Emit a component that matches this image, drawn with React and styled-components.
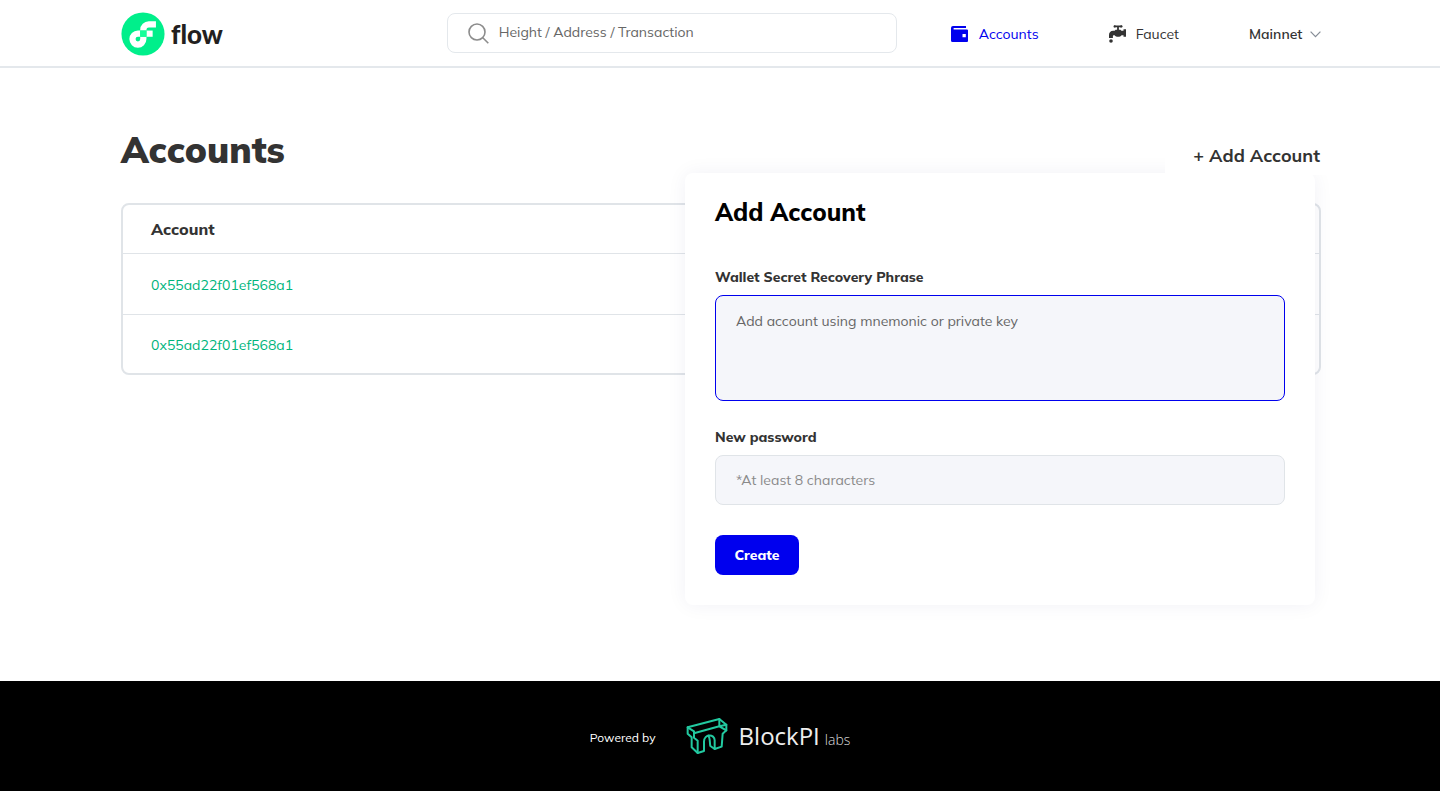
import React from "react";
import styled, { createGlobalStyle } from "styled-components";

const GlobalStyle = createGlobalStyle`
  *, *::before, *::after { box-sizing: border-box; }
  body {
    margin: 0;
    background: #fff;
    color: #333;
    font: 400 14px/20px Mulish, "Open Sans", sans-serif;
  }
  button, input, textarea, select { font: inherit; color: inherit; }
`;

const Page = styled.div`
  min-height: 100vh;
  display: flex;
  flex-direction: column;
`;

const Header = styled.header`
  padding: 13px 20px 13px 22px;
  border-bottom: 2px solid #e4e8ec;
`;

const Container = styled.div`
  width: 100%;
  max-width: 1200px;
  margin: 0 auto;
`;

const HeaderBar = styled(Container)`
  display: flex;
  align-items: center;
  justify-content: space-between;
  height: 40px;
`;

const Logo = styled.a`
  display: flex;
  align-items: center;
  gap: 6px;
  padding-top: 2px;
  color: #231f20;
  text-decoration: none;
  font: 900 26px/32px Lato, sans-serif;
  font-variant-ligatures: none;
`;

const HeaderRight = styled.div`
  display: flex;
  align-items: center;
  gap: 54px;
`;

const SearchBox = styled.label`
  display: flex;
  align-items: center;
  gap: 10px;
  width: 450px;
  height: 40px;
  padding: 0 20px;
  border: 1px solid #e4e8ec;
  border-radius: 8px;
  color: #8c8c8c;
`;

const SearchInput = styled.input`
  flex: 1;
  min-width: 0;
  height: 36px;
  padding: 0 0 2px;
  border: 0;
  outline: 0;
  background: transparent;
  &::placeholder { color: #666; opacity: 1; }
`;

const Nav = styled.nav`
  display: flex;
  align-items: center;
  gap: 70px;
  padding-top: 2px;
`;

const NavLink = styled.a`
  display: flex;
  align-items: center;
  gap: 10px;
  color: ${(p) => (p.$active ? "#0000ee" : "#333")};
  text-decoration: none;
`;

const NetworkPicker = styled.div`
  display: flex;
  align-items: center;
  position: relative;
`;

const NetworkSelect = styled.select`
  appearance: none;
  padding: 0 18px 0 0;
  border: 0;
  background: transparent;
  font-weight: 600;
`;

const Chevron = styled.svg`
  position: absolute;
  right: 0;
  pointer-events: none;
`;

const Main = styled.main`
  flex: 1;
  padding: 59px 20px 60px 22px;
`;

const TitleRow = styled.div`
  display: flex;
  align-items: flex-end;
  justify-content: space-between;
  margin-bottom: 28px;
`;

const PageTitle = styled.h1`
  margin: 0;
  padding-bottom: 2px;
  font-size: 36px;
  line-height: 46px;
  font-weight: 900;
`;

const AddMenu = styled.div`
  position: relative;
`;

const AddButton = styled.button`
  position: relative;
  z-index: 2;
  display: block;
  height: 38px;
  margin-right: -28px;
  padding: 0 29px 0 28px;
  border: 0;
  background: #fff;
  font-size: 18px;
  line-height: 24px;
  font-weight: 700;
`;

const Popover = styled.form`
  position: absolute;
  z-index: 1;
  top: calc(100% - 2px);
  right: 6px;
  width: 630px;
  padding: 24px 30px 30px;
  border-radius: 8px;
  background: #fff;
  box-shadow: 0 0 20px rgba(30, 40, 110, 0.06);
`;

const PopoverTitle = styled.h2`
  margin: 0 0 40px;
  color: #000;
  font-size: 24px;
  line-height: 30px;
  font-weight: 800;
`;

const FieldLabel = styled.label`
  display: block;
  margin-bottom: 8px;
  font-weight: 800;
`;

const PhraseInput = styled.textarea`
  display: block;
  width: 100%;
  height: 106px;
  margin-bottom: 26px;
  padding: 15px 20px;
  border: 1px solid #0000ee;
  border-radius: 8px;
  outline: 0;
  resize: none;
  background: #f5f6fa;
  &::placeholder { color: #666; opacity: 1; }
`;

const PasswordInput = styled.input`
  display: block;
  width: 100%;
  height: 50px;
  margin-bottom: 30px;
  padding: 0 20px;
  border: 1px solid #e0e4e8;
  border-radius: 8px;
  outline: 0;
  background: #f5f6fa;
  &::placeholder { color: #8a8a8a; opacity: 1; }
`;

const SubmitButton = styled.button`
  display: block;
  min-width: 84px;
  height: 40px;
  padding: 0 18px;
  border: 0;
  border-radius: 8px;
  background: #0000ee;
  color: #fff;
  font-weight: 800;
`;

const AccountTable = styled.table`
  width: 100%;
  border: 2px solid #e0e4e8;
  border-radius: 8px;
  border-collapse: separate;
  border-spacing: 0;
`;

const HeadCell = styled.th`
  height: 49px;
  padding: 0 28px;
  border-bottom: 1px solid #e0e4e8;
  text-align: left;
  font-size: 16px;
  font-weight: 800;
`;

const Cell = styled.td`
  height: 61px;
  padding: 2px 28px 0;
  border-bottom: 1px solid #e0e4e8;
  tr:last-child > & { height: 58px; border-bottom: 0; }
`;

const AddressLink = styled.a`
  color: #00b57c;
  text-decoration: none;
`;

const Footer = styled.footer`
  display: flex;
  align-items: center;
  justify-content: center;
  gap: 30px;
  height: 110px;
  background: #000;
  color: #fff;
`;

const PoweredBy = styled.span`
  padding-top: 4px;
  font-size: 12px;
`;

const Brand = styled.a`
  display: flex;
  align-items: center;
  gap: 11px;
  color: #eee;
  text-decoration: none;
`;

const BrandName = styled.span`
  display: flex;
  align-items: baseline;
  gap: 5px;
  padding-top: 4px;
  font-family: "Open Sans", sans-serif;
  font-size: 24px;
  line-height: 32px;
`;

const BrandSuffix = styled.span`
  color: #ddd;
  font-size: 14px;
  font-weight: 300;
`;

const FlowMark = () => (
  <svg width="44" height="44" viewBox="0 0 100 100" aria-hidden="true">
    <circle cx="50" cy="50" r="49" fill="#00ef8b" />
    <path fill="#fff" d="M57.82 42.18h14.12V56.3H57.82z" />
    <path fill="#fff" d="M43.71 61.59a5.3 5.3 0 1 1-5.3-5.3h5.3V42.18h-5.3a19.41 19.41 0 1 0 19.41 19.41v-5.3H43.71Z" />
    <path fill="#fff" d="M63.12 35.12h16.29V21H63.12a19.43 19.43 0 0 0-19.41 19.41v1.77h14.11v-1.77a5.3 5.3 0 0 1 5.3-5.29Z" />
    <path fill="#16ff99" d="M43.71 42.18h14.11v14.11H43.71z" />
  </svg>
);

const SearchIcon = () => (
  <svg width="21" height="21" viewBox="0 0 21 21" fill="none" stroke="currentColor" strokeWidth="1.6" aria-hidden="true">
    <circle cx="9" cy="9" r="8" />
    <path d="M14.8 14.8 20.3 20.3" />
  </svg>
);

const WalletIcon = () => (
  <svg width="18" height="16" viewBox="0 0 18 16" aria-hidden="true">
    <path
      fill="currentColor"
      fillRule="evenodd"
      d="M2 0h13v2H2.6v1.4H16a1 1 0 0 1 1 1V15a1 1 0 0 1-1 1H1.5A1.5 1.5 0 0 1 0 14.5V2a2 2 0 0 1 2-2ZM11.5 8v3.3h3.3V8Z"
    />
  </svg>
);

const FaucetIcon = () => (
  <svg width="17" height="18" viewBox="0 0 17 18" fill="currentColor" aria-hidden="true">
    <path d="M4.5 1.4a1.3 1.3 0 0 1 2.3-.8h4.4a1.3 1.3 0 1 1 0 1.6H9.9v2.5h1.5l1 1.1h2.1V4.3H17v7.5h-2.5v-1.6h-1.9c-.8 1-2 1.5-3.5 1.5s-2.7-.5-3.5-1.5H5c-.8 0-1.1.4-1.1 1.2V13H0v-3c0-2.6 1.600-4.200 4.200-4.200h1.400l1-1.100h1.500V2.200H6.800a1.300 1.300 0 0 1-2.300-.8Z" />
    <circle cx="2" cy="16" r="1.8" />
  </svg>
);

const BlockPiMark = () => (
  <svg width="42" height="38" viewBox="12 10 126 114" fill="none" stroke="#22c9a0" strokeWidth="6" strokeLinejoin="round" strokeLinecap="round" aria-hidden="true">
    <path d="M17 41 112 16 133 33V50L122 60 119 99 98 106V80C98 60 66 60 66 84V112L47 118 29 101V71L17 60Z" />
    <path d="M17 41 36 53V72L47 81V118M36 59 112 38M112 16V38L133 50M112 38 133 33M79 66C85 74 83 90 85 97L98 106" />
  </svg>
);

const addresses = ["0x55ad22f01ef568a1", "0x55ad22f01ef568a1"];

export default function App() {
  return (
    <Page>
      <GlobalStyle />
      <Header>
        <HeaderBar>
          <Logo href="#home">
            <FlowMark />
            flow
          </Logo>
          <HeaderRight>
            <SearchBox>
              <SearchIcon />
              <SearchInput type="search" aria-label="Search" placeholder="Height / Address / Transaction" />
            </SearchBox>
            <Nav>
              <NavLink href="#accounts" $active>
                <WalletIcon />
                Accounts
              </NavLink>
              <NavLink href="#faucet">
                <FaucetIcon />
                Faucet
              </NavLink>
              <NetworkPicker>
                <NetworkSelect aria-label="Network">
                  <option>Mainnet</option>
                </NetworkSelect>
                <Chevron width="11" height="7" viewBox="0 0 11 7" fill="none" stroke="#858c96" strokeWidth="1.2" aria-hidden="true">
                  <path d="M.6.7 5.5 5.7 10.4.7" />
                </Chevron>
              </NetworkPicker>
            </Nav>
          </HeaderRight>
        </HeaderBar>
      </Header>

      <Main>
        <Container>
          <TitleRow>
            <PageTitle>Accounts</PageTitle>
            <AddMenu>
              <AddButton type="button">+ Add Account</AddButton>
              <Popover>
                <PopoverTitle>Add Account</PopoverTitle>
                <FieldLabel htmlFor="phrase">Wallet Secret Recovery Phrase</FieldLabel>
                <PhraseInput id="phrase" placeholder="Add account using mnemonic or private key" />
                <FieldLabel htmlFor="password">New password</FieldLabel>
                <PasswordInput id="password" type="password" placeholder="*At least 8 characters" />
                <SubmitButton type="button">Create</SubmitButton>
              </Popover>
            </AddMenu>
          </TitleRow>
          <AccountTable>
            <thead>
              <tr>
                <HeadCell scope="col">Account</HeadCell>
              </tr>
            </thead>
            <tbody>
              {addresses.map((address, i) => (
                <tr key={i}>
                  <Cell>
                    <AddressLink href="#account">{address}</AddressLink>
                  </Cell>
                </tr>
              ))}
            </tbody>
          </AccountTable>
        </Container>
      </Main>

      <Footer>
        <PoweredBy>Powered by</PoweredBy>
        <Brand href="#blockpi">
          <BlockPiMark />
          <BrandName>
            BlockPI
            <BrandSuffix>labs</BrandSuffix>
          </BrandName>
        </Brand>
      </Footer>
    </Page>
  );
}
